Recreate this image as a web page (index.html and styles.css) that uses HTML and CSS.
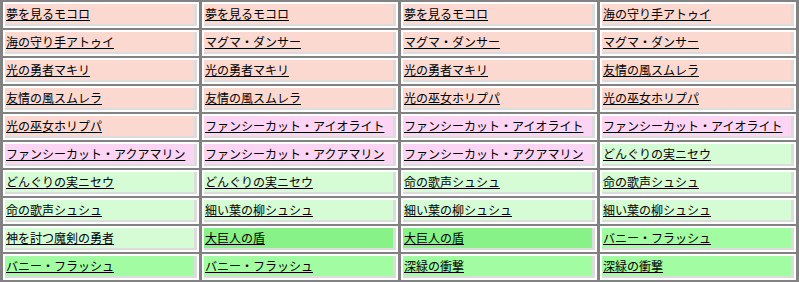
FILE: index.html
```html
<!DOCTYPE html>
<html lang="ja">
<head>
<meta charset="utf-8">
<link rel="stylesheet" href="styles.css">
</head>
<body>
<table class="grid">
<tr><td class="p"><a href="#">夢を見るモコロ</a></td><td class="p"><a href="#">夢を見るモコロ</a></td><td class="p"><a href="#">夢を見るモコロ</a></td><td class="p"><a href="#">海の守り手アトゥイ</a></td></tr>
<tr><td class="p"><a href="#">海の守り手アトゥイ</a></td><td class="p"><a href="#">マグマ・ダンサー</a></td><td class="p"><a href="#">マグマ・ダンサー</a></td><td class="p"><a href="#">マグマ・ダンサー</a></td></tr>
<tr><td class="p"><a href="#">光の勇者マキリ</a></td><td class="p"><a href="#">光の勇者マキリ</a></td><td class="p"><a href="#">光の勇者マキリ</a></td><td class="p"><a href="#">友情の風スムレラ</a></td></tr>
<tr><td class="p"><a href="#">友情の風スムレラ</a></td><td class="p"><a href="#">友情の風スムレラ</a></td><td class="p"><a href="#">光の巫女ホリプパ</a></td><td class="p"><a href="#">光の巫女ホリプパ</a></td></tr>
<tr><td class="p"><a href="#">光の巫女ホリプパ</a></td><td class="m"><a href="#">ファンシーカット・アイオライト</a></td><td class="m"><a href="#">ファンシーカット・アイオライト</a></td><td class="m"><a href="#">ファンシーカット・アイオライト</a></td></tr>
<tr><td class="m"><a href="#">ファンシーカット・アクアマリン</a></td><td class="m"><a href="#">ファンシーカット・アクアマリン</a></td><td class="m"><a href="#">ファンシーカット・アクアマリン</a></td><td class="g"><a href="#">どんぐりの実ニセウ</a></td></tr>
<tr><td class="g"><a href="#">どんぐりの実ニセウ</a></td><td class="g"><a href="#">どんぐりの実ニセウ</a></td><td class="g"><a href="#">命の歌声シュシュ</a></td><td class="g"><a href="#">命の歌声シュシュ</a></td></tr>
<tr><td class="g"><a href="#">命の歌声シュシュ</a></td><td class="g"><a href="#">細い葉の柳シュシュ</a></td><td class="g"><a href="#">細い葉の柳シュシュ</a></td><td class="g"><a href="#">細い葉の柳シュシュ</a></td></tr>
<tr><td class="g"><a href="#">神を討つ魔剣の勇者</a></td><td class="b"><a href="#">大巨人の盾</a></td><td class="b"><a href="#">大巨人の盾</a></td><td class="l"><a href="#">バニー・フラッシュ</a></td></tr>
<tr><td class="l"><a href="#">バニー・フラッシュ</a></td><td class="l"><a href="#">バニー・フラッシュ</a></td><td class="l"><a href="#">深緑の衝撃</a></td><td class="l"><a href="#">深緑の衝撃</a></td></tr>
</table>
</body>
</html>
```
FILE: styles.css
```css
html, body {
  margin: 0;
  padding: 0;
  background: #ffffff;
}
.grid {
  width: 799px;
  table-layout: fixed;
  border-collapse: separate;
  border-spacing: 3px 2px;
  background: #828282;
  font-family: "Noto Sans CJK JP", "DejaVu Sans", sans-serif;
  font-size: 12px;
}
.grid td {
  padding: 0 3px 2px 1px;
  border: 2px solid #ffffff;
  box-shadow: inset -3px -2px 0 #dcdcdc;
  line-height: 20px;
  white-space: nowrap;
  overflow: hidden;
  vertical-align: top;
}
.grid a {
  color: #000000;
  text-decoration: underline;
}
.p { background: #fcd9d0; }
.m { background: #fcd5f5; }
.g { background: #d5fcd5; }
.b { background: #88f288; }
.l { background: #a2fca2; }
```
